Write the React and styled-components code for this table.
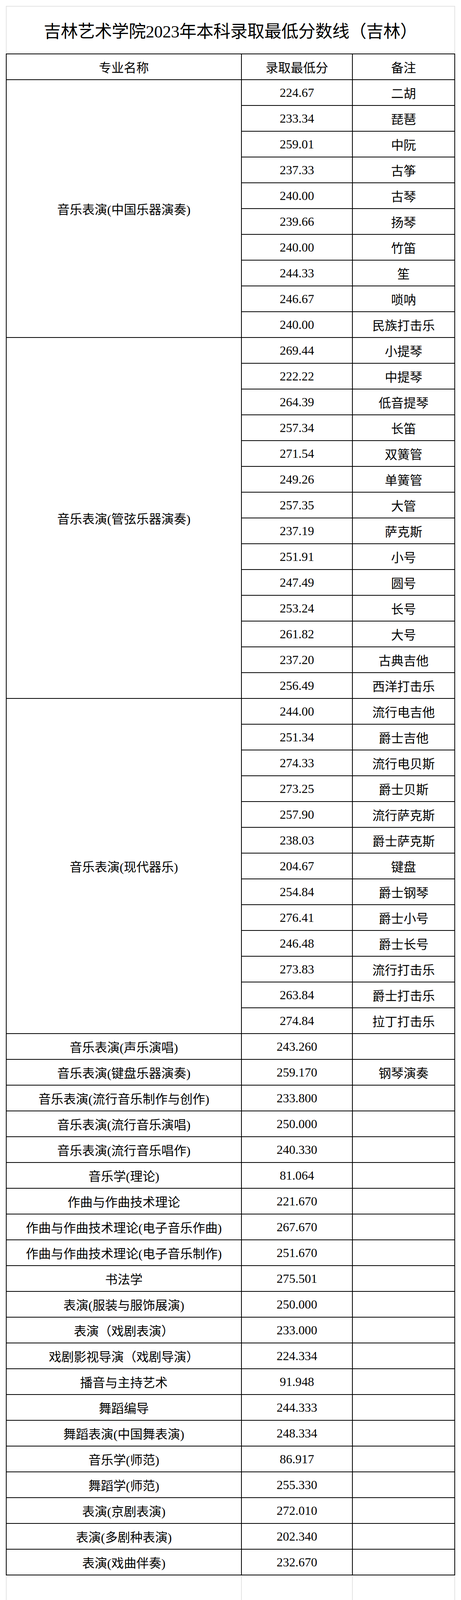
import React from "react";
import styled, { createGlobalStyle } from "styled-components";

const GlobalStyle = createGlobalStyle`
    html, body {
        margin: 0;
        padding: 0;
        background: #fff;
    }

    body {
        color: #000;
        font-family: "Liberation Serif", "Noto Sans CJK SC", serif;
    }
`;

const Sheet = styled.div`
    width: 1150px;
    margin: 15px;
`;

const TitleCell = styled.div`
    height: 120px;
    border: 2px solid #e3e3e3;
    border-bottom: none;
    display: flex;
    align-items: center;
    justify-content: center;
    font-size: 44px;
    letter-spacing: -0.5px;
`;

const Grid = styled.div`
    display: grid;
    grid-template-columns: 600px 282px 260px;
    grid-auto-rows: ${props => props.rowHeight || 64}px;
    gap: 2px;
    padding: ${props => (props.filler ? "0 2px 2px" : "2px")};
    background-color: ${props => (props.filler ? "#e3e3e3" : "#000")};
`;

const Cell = styled.div`
    background-color: #fff;
    display: flex;
    align-items: center;
    justify-content: center;
    font-size: 32px;
    white-space: nowrap;
    grid-column: ${props => props.col || "auto"};
    grid-row: ${props => (props.span ? `span ${props.span}` : "auto")};
`;

const groups = [
    {
        name: "音乐表演(中国乐器演奏)",
        items: [
            ["224.67", "二胡"],
            ["233.34", "琵琶"],
            ["259.01", "中阮"],
            ["237.33", "古筝"],
            ["240.00", "古琴"],
            ["239.66", "扬琴"],
            ["240.00", "竹笛"],
            ["244.33", "笙"],
            ["246.67", "唢呐"],
            ["240.00", "民族打击乐"],
        ],
    },
    {
        name: "音乐表演(管弦乐器演奏)",
        items: [
            ["269.44", "小提琴"],
            ["222.22", "中提琴"],
            ["264.39", "低音提琴"],
            ["257.34", "长笛"],
            ["271.54", "双簧管"],
            ["249.26", "单簧管"],
            ["257.35", "大管"],
            ["237.19", "萨克斯"],
            ["251.91", "小号"],
            ["247.49", "圆号"],
            ["253.24", "长号"],
            ["261.82", "大号"],
            ["237.20", "古典吉他"],
            ["256.49", "西洋打击乐"],
        ],
    },
    {
        name: "音乐表演(现代器乐)",
        items: [
            ["244.00", "流行电吉他"],
            ["251.34", "爵士吉他"],
            ["274.33", "流行电贝斯"],
            ["273.25", "爵士贝斯"],
            ["257.90", "流行萨克斯"],
            ["238.03", "爵士萨克斯"],
            ["204.67", "键盘"],
            ["254.84", "爵士钢琴"],
            ["276.41", "爵士小号"],
            ["246.48", "爵士长号"],
            ["273.83", "流行打击乐"],
            ["263.84", "爵士打击乐"],
            ["274.84", "拉丁打击乐"],
        ],
    },
];

const singles = [
    ["音乐表演(声乐演唱)", "243.260", ""],
    ["音乐表演(键盘乐器演奏)", "259.170", "钢琴演奏"],
    ["音乐表演(流行音乐制作与创作)", "233.800", ""],
    ["音乐表演(流行音乐演唱)", "250.000", ""],
    ["音乐表演(流行音乐唱作)", "240.330", ""],
    ["音乐学(理论)", "81.064", ""],
    ["作曲与作曲技术理论", "221.670", ""],
    ["作曲与作曲技术理论(电子音乐作曲)", "267.670", ""],
    ["作曲与作曲技术理论(电子音乐制作)", "251.670", ""],
    ["书法学", "275.501", ""],
    ["表演(服装与服饰展演)", "250.000", ""],
    ["表演（戏剧表演）", "233.000", ""],
    ["戏剧影视导演（戏剧导演）", "224.334", ""],
    ["播音与主持艺术", "91.948", ""],
    ["舞蹈编导", "244.333", ""],
    ["舞蹈表演(中国舞表演)", "248.334", ""],
    ["音乐学(师范)", "86.917", ""],
    ["舞蹈学(师范)", "255.330", ""],
    ["表演(京剧表演)", "272.010", ""],
    ["表演(多剧种表演)", "202.340", ""],
    ["表演(戏曲伴奏)", "232.670", ""],
];

const App = () => (
    <>
        <GlobalStyle />
        <Sheet>
            <TitleCell>吉林艺术学院2023年本科录取最低分数线（吉林）</TitleCell>
            <Grid>
                <Cell>专业名称</Cell>
                <Cell>录取最低分</Cell>
                <Cell>备注</Cell>
                {groups.map(group => (
                    <React.Fragment key={group.name}>
                        <Cell col={1} span={group.items.length}>{group.name}</Cell>
                        {group.items.map(([score, note], index) => (
                            <React.Fragment key={index}>
                                <Cell col={2}>{score}</Cell>
                                <Cell col={3}>{note}</Cell>
                            </React.Fragment>
                        ))}
                    </React.Fragment>
                ))}
                {singles.map(([name, score, note]) => (
                    <React.Fragment key={name}>
                        <Cell col={1}>{name}</Cell>
                        <Cell col={2}>{score}</Cell>
                        <Cell col={3}>{note}</Cell>
                    </React.Fragment>
                ))}
            </Grid>
            <Grid filler rowHeight={66}>
                {Array.from({ length: 9 }).map((_, index) => <Cell key={index} />)}
            </Grid>
        </Sheet>
    </>
);

export default App;
